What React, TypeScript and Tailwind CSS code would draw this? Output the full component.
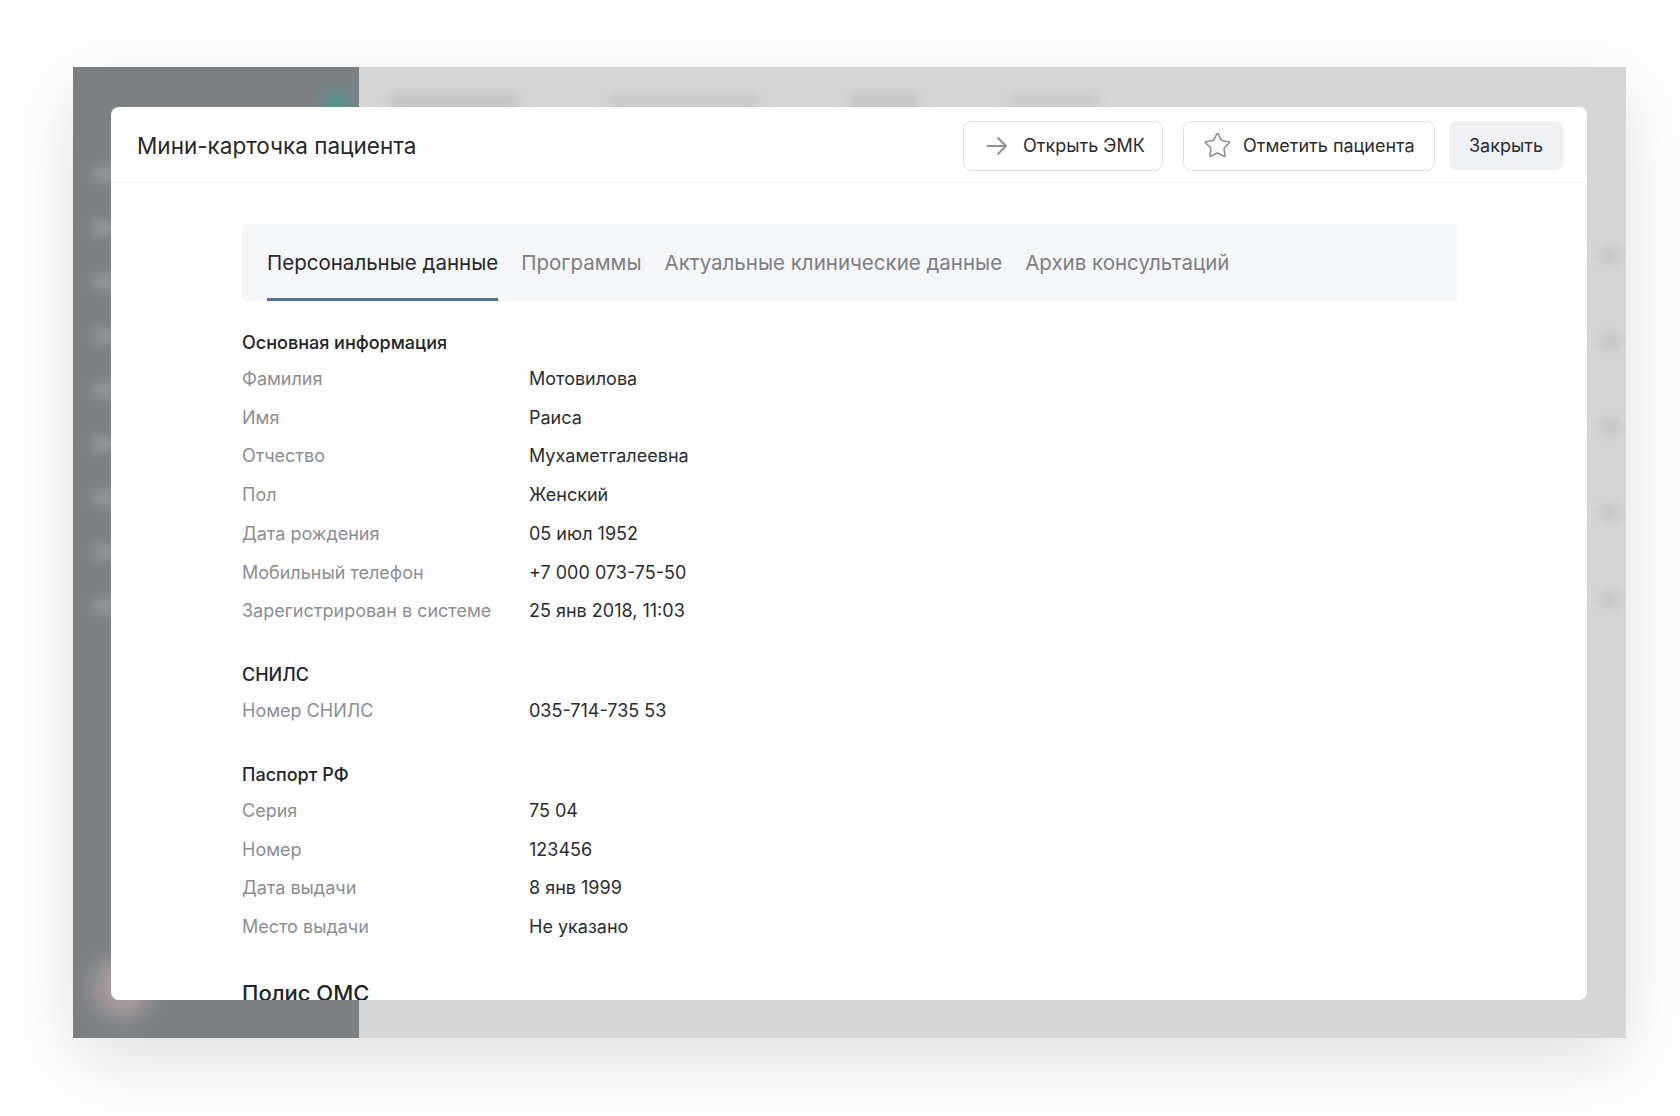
import { Star } from "lucide-react";

type Row = { label: string; value: string };

const sections: { title: string; rows: Row[] }[] = [
  {
    title: "Основная информация",
    rows: [
      { label: "Фамилия", value: "Мотовилова" },
      { label: "Имя", value: "Раиса" },
      { label: "Отчество", value: "Мухаметгалеевна" },
      { label: "Пол", value: "Женский" },
      { label: "Дата рождения", value: "05 июл 1952" },
      { label: "Мобильный телефон", value: "+7 000 073-75-50" },
      { label: "Зарегистрирован в системе", value: "25 янв 2018, 11:03" },
    ],
  },
  {
    title: "СНИЛС",
    rows: [{ label: "Номер СНИЛС", value: "035-714-735 53" }],
  },
  {
    title: "Паспорт РФ",
    rows: [
      { label: "Серия", value: "75 04" },
      { label: "Номер", value: "123456" },
      { label: "Дата выдачи", value: "8 янв 1999" },
      { label: "Место выдачи", value: "Не указано" },
    ],
  },
];

const tabs = ["Персональные данные", "Программы", "Актуальные клинические данные", "Архив консультаций"];

const App = () => {
  return (
    <div className="min-h-screen w-full bg-white pl-[73px] pt-[67px] font-['Inter','Noto_Sans',sans-serif]">
      <div className="relative flex h-[971px] w-[1553px] overflow-hidden shadow-[0_22px_70px_rgba(0,0,0,0.13)]">
        {/* blurred app behind the modal */}
        <div className="relative w-[286px] bg-[#7c8083]">
          <div className="absolute left-[250px] top-[25px] h-[26px] w-[26px] rounded-full bg-[#3aa394] blur-[8px] opacity-70" />
          <div className="absolute left-[20px] top-[100px] flex flex-col gap-[40px] blur-[6px]">
            {[0, 1, 2, 3, 4, 5, 6, 7, 8].map((i) => (
              <div key={i} className="h-[14px] w-[30px] rounded bg-[#959a9d]" />
            ))}
          </div>
          <div className="absolute left-[20px] top-[890px] h-[60px] w-[60px] rounded-full bg-[#b5a6a8] blur-[10px] opacity-80" />
        </div>
        <div className="relative flex-1 bg-[#d6d6d6]">
          <div className="absolute left-[30px] top-[28px] flex gap-[90px] blur-[6px]">
            <div className="h-[12px] w-[130px] rounded bg-[#bdbdbd]" />
            <div className="h-[12px] w-[150px] rounded bg-[#c2c2c2]" />
            <div className="h-[12px] w-[70px] rounded bg-[#c0c0c0]" />
            <div className="h-[12px] w-[90px] rounded bg-[#c4c4c4]" />
          </div>
          <div className="absolute right-[6px] top-[180px] flex flex-col gap-[70px] blur-[6px]">
            {[0, 1, 2, 3, 4].map((i) => (
              <div key={i} className="h-[16px] w-[20px] rounded bg-[#c2c2c2]" />
            ))}
          </div>
        </div>

        {/* modal */}
        <div className="absolute bottom-[38px] left-[38px] right-[39px] top-[40px] flex flex-col overflow-hidden rounded-lg bg-white">
          <div className="flex h-[76px] shrink-0 items-center justify-between border-b border-[#f1f2f4] pl-[26px] pr-[24px]">
            <h1 className="pt-[3px] text-[22.5px] font-normal text-[#25272a]">Мини-карточка пациента</h1>
            <div className="flex items-center pt-[2px]">
              <button className="flex h-[50px] w-[200px] items-center gap-[15px] rounded-lg border border-[#dfe0e3] pl-[22px] text-[18px] text-[#2a2c2f]">
                <svg width="22" height="22" viewBox="0 0 22 22" fill="none" stroke="#8c8f93" strokeWidth="1.8" strokeLinecap="round" strokeLinejoin="round">
                  <path d="M1.5 11h18.5M12 3l8 8-8 8" />
                </svg>
                Открыть ЭМК
              </button>
              <button className="ml-[20px] flex h-[50px] w-[252px] items-center gap-[11px] rounded-lg border border-[#dfe0e3] pl-[19px] text-[18px] text-[#2a2c2f]">
                <Star size={29} strokeWidth={1.3} className="text-[#8c8f93]" />
                Отметить пациента
              </button>
              <button className="ml-[14px] flex h-[49px] w-[114px] items-center justify-center rounded-lg bg-[#eef0f2] text-[18px] text-[#2a2c2f]">
                Закрыть
              </button>
            </div>
          </div>

          <div className="pl-[131px] pr-[130px] pt-[41px]">
            <div className="flex h-[77px] gap-[23px] rounded bg-[#f5f6f8] pl-[25px]">
              {tabs.map((t, i) => (
                <div
                  key={t}
                  className={
                    i === 0
                      ? "flex h-full items-center border-b-[3px] border-[#4d7198] pt-[4px] text-[20.5px] text-[#27292c]"
                      : "flex h-full items-center border-b-[3px] border-transparent pt-[4px] text-[20.5px] text-[#7d8085]"
                  }
                >
                  {t}
                </div>
              ))}
            </div>

            <div className="pt-[29px]">
              {sections.map((s, si) => (
                <div key={s.title} className={si === 0 ? "" : "mt-[32px]"}>
                  <div className="mb-[3px] h-[26px] text-[18px] leading-[26px] font-medium text-[#222427]">{s.title}</div>
                  {s.rows.map((r) => (
                    <div key={r.label} className="flex h-[38.75px] items-center text-[18px]">
                      <div className="w-[287px] text-[#8b8e93]">{r.label}</div>
                      <div className="text-[#2b2d30]">{r.value}</div>
                    </div>
                  ))}
                </div>
              ))}
              <div className="mt-[32px] h-[30px] text-[22px] leading-[30px] font-medium text-[#222427]">Полис ОМС</div>
            </div>
          </div>
        </div>
      </div>
    </div>
  );
};

export default App;
